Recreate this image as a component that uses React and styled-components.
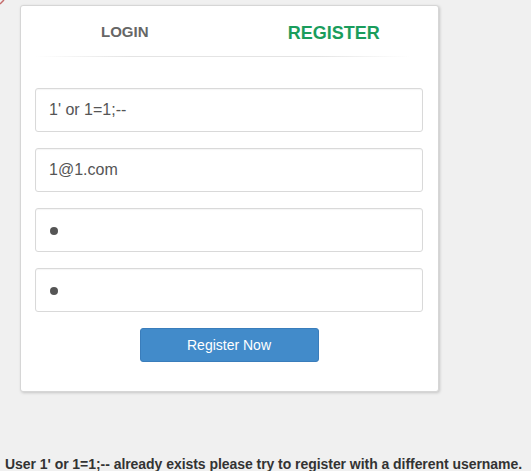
import React from "react";
import styled, { createGlobalStyle } from "styled-components";

const Global = createGlobalStyle`
  html, body { margin: 0; padding: 0; background: #f0f0f0; }
  body { font-family: "Liberation Sans", Arial, sans-serif; }
`;

const Page = styled.div`
  position: relative;
  width: 531px;
  height: 471px;
  overflow: hidden;
  padding-top: 5px;
  box-sizing: border-box;
`;

const Corner = styled.svg`
  position: absolute;
  left: 0;
  top: 0;
`;

const Card = styled.div`
  margin-left: 20px;
  width: 419px;
  height: 387px;
  background: #fff;
  border-radius: 3px;
  border: 1px solid #d6d6d6;
  box-sizing: border-box;
  box-shadow: 1px 1px 3px rgba(0, 0, 0, 0.18);
  display: flex;
  flex-direction: column;
`;

const Tabs = styled.div`
  display: grid;
  grid-template-columns: 1fr 1fr;
  height: 50px;
  margin: 0 14px;
`;

const Divider = styled.div`
  height: 1px;
  margin: 0 28px 0 14px;
  background: linear-gradient(to right, rgba(230,230,230,0) 0%, #e4e4e4 25%, #e4e4e4 75%, rgba(230,230,230,0) 100%);
`;

const Tab = styled.div`
  display: flex;
  align-items: center;
  justify-content: center;
  font-weight: bold;
  font-size: ${(p) => (p.$active ? "18px" : "15px")};
  color: ${(p) => (p.$active ? "#1a9d5c" : "#666")};
  padding-top: ${(p) => (p.$active ? "4px" : "1px")};
  padding-left: ${(p) => (p.$active ? "14px" : "0")};
  padding-right: ${(p) => (p.$active ? "0" : "15px")};
`;

const Form = styled.div`
  display: flex;
  flex-direction: column;
  gap: 16px;
  padding: 31px 15px 0 14px;
`;

const Field = styled.div`
  height: 44px;
  border: 1px solid #d9d9d9;
  border-radius: 3px;
  box-sizing: border-box;
  display: flex;
  align-items: center;
  padding-left: 13px;
  font-size: 16px;
  color: #555;
  box-shadow: inset 0 1px 1px rgba(0, 0, 0, 0.04);
`;

const Dot = styled.span`
  width: 8px;
  height: 8px;
  border-radius: 50%;
  background: #555;
  margin-left: 1px;
  margin-top: 2px;
`;

const ButtonRow = styled.div`
  display: flex;
  justify-content: center;
`;

const Button = styled.button`
  width: 179px;
  height: 34px;
  background: #428bca;
  border: 1px solid #3a7dbb;
  border-radius: 3px;
  color: #fff;
  font-family: "Liberation Sans", Arial, sans-serif;
  font-size: 14px;
`;

const Message = styled.div`
  margin-top: 64px;
  margin-left: 5px;
  font-size: 14px;
  font-weight: bold;
  color: #333;
  white-space: nowrap;
  letter-spacing: -0.05px;
`;

export default function App() {
  return (
    <>
      <Global />
      <Page>
        <Corner width="6" height="6" viewBox="0 0 6 6">
          <line x1="0" y1="4" x2="4" y2="0" stroke="#c46a6a" strokeWidth="1.5" />
        </Corner>
        <Card>
          <Tabs>
            <Tab>LOGIN</Tab>
            <Tab $active>REGISTER</Tab>
          </Tabs>
          <Divider />
          <Form>
            <Field>1' or 1=1;--</Field>
            <Field>1@1.com</Field>
            <Field><Dot /></Field>
            <Field><Dot /></Field>
            <ButtonRow>
              <Button>Register Now</Button>
            </ButtonRow>
          </Form>
        </Card>
        <Message>User 1' or 1=1;-- already exists please try to register with a different username.</Message>
      </Page>
    </>
  );
}
